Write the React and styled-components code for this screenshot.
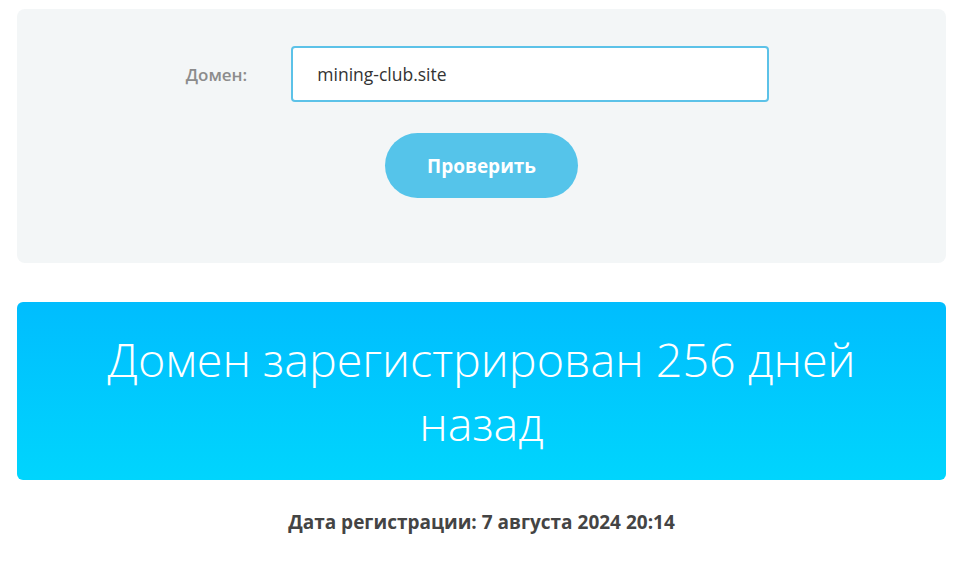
import React from 'react';
import styled, { createGlobalStyle } from 'styled-components';

const GlobalStyle = createGlobalStyle`
  html, body {
    margin: 0;
    padding: 0;
    background: #ffffff;
  }
  body {
    font-family: 'Open Sans', 'Liberation Sans', sans-serif;
  }
`;

const Page = styled.div`
  display: flex;
  flex-direction: column;
  padding: 9px 28px 0 17px;
`;

const CheckPanel = styled.form`
  display: flex;
  flex-direction: column;
  align-items: center;
  gap: 31px;
  background: #f3f6f7;
  border-radius: 8px;
  padding: 37px 0 65px;
  margin: 0;
`;

const FieldRow = styled.div`
  display: flex;
  align-items: center;
  gap: 44px;
  margin-left: -8px;
`;

const Label = styled.label`
  font-size: 17px;
  font-weight: 600;
  color: #8c8c8c;
`;

const DomainInput = styled.input`
  box-sizing: border-box;
  width: 478px;
  height: 56px;
  border: 2px solid #5cc2e8;
  border-radius: 4px;
  background: #ffffff;
  padding: 0 24px;
  font-family: 'Open Sans', 'Liberation Sans', sans-serif;
  font-size: 17.5px;
  color: #333333;
  outline: none;
`;

const CheckButton = styled.button`
  width: 193px;
  height: 65px;
  border: none;
  border-radius: 33px;
  background: #55c4ea;
  color: #ffffff;
  font-family: 'Open Sans', 'Liberation Sans', sans-serif;
  font-size: 19px;
  font-weight: 700;
  cursor: pointer;
`;

const ResultBanner = styled.div`
  display: flex;
  align-items: center;
  justify-content: center;
  margin-top: 39px;
  height: 178px;
  border-radius: 6px;
  background: linear-gradient(to bottom, #00bdfe, #00d5fd);
`;

const ResultText = styled.h2`
  margin: 0;
  max-width: 800px;
  text-align: center;
  color: #ffffff;
  font-size: 46.7px;
  font-weight: 300;
  line-height: 64px;
`;

const RegDate = styled.p`
  margin: 29px 0 0;
  text-align: center;
  font-size: 19px;
  font-weight: 700;
  color: #444444;
`;

export default function App() {
  return (
    <Page>
      <GlobalStyle />
      <CheckPanel onSubmit={(e) => e.preventDefault()}>
        <FieldRow>
          <Label htmlFor="domain">Домен:</Label>
          <DomainInput id="domain" defaultValue="mining-club.site" />
        </FieldRow>
        <CheckButton type="submit">Проверить</CheckButton>
      </CheckPanel>
      <ResultBanner>
        <ResultText>Домен зарегистрирован 256 дней назад</ResultText>
      </ResultBanner>
      <RegDate>Дата регистрации: 7 августа 2024 20:14</RegDate>
    </Page>
  );
}
